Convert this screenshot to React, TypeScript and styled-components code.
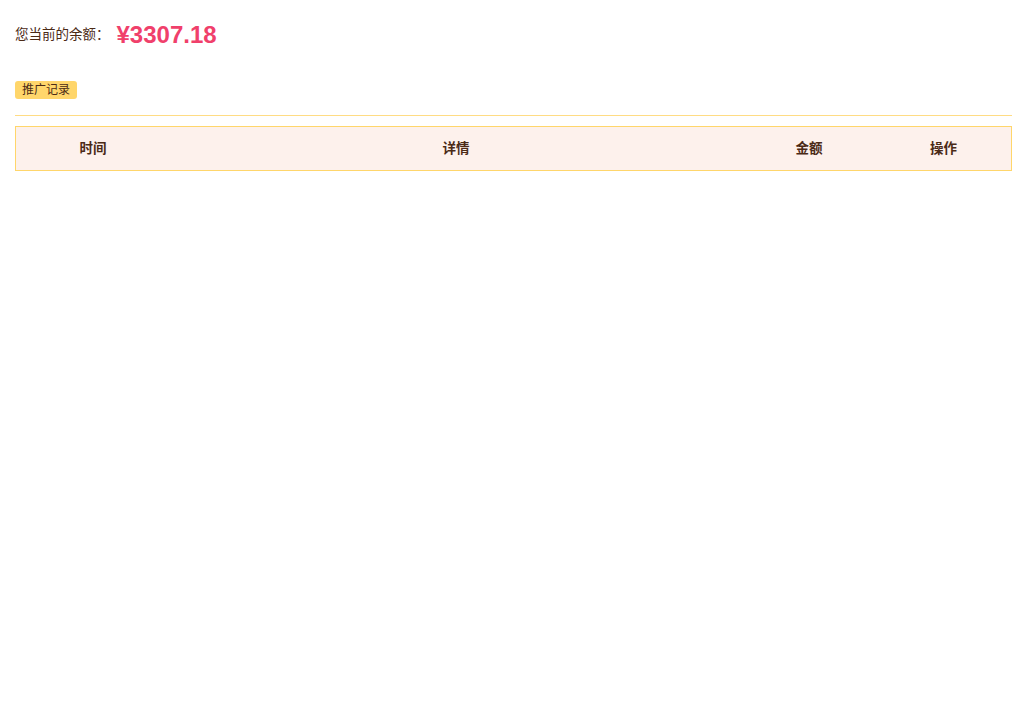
import styled, { createGlobalStyle } from 'styled-components';

const GlobalStyle = createGlobalStyle`
  html, body {
    margin: 0;
    padding: 0;
    background: #fff;
    font-family: "Liberation Sans", Arial, "Noto Sans CJK SC", sans-serif;
    color: #4b2a16;
  }
`;

const columns = [
  { title: '时间', width: 154 },
  { title: '详情', width: 572 },
  { title: '金额', width: 134 },
  { title: '操作', width: 135 },
];

export default function App() {
  return (
    <>
      <GlobalStyle />
      <Page>
        <Balance>
          <Label>您当前的余额：</Label>
          <Amount>¥3307.18</Amount>
        </Balance>
        <Tabs>
          <Tab>推广记录</Tab>
        </Tabs>
        <Table>
          <HeadRow>
            {columns.map((c) => (
              <HeadCell key={c.title} $width={c.width}>
                {c.title}
              </HeadCell>
            ))}
          </HeadRow>
        </Table>
      </Page>
    </>
  );
}

const Page = styled.div`
  padding: 20px 15px 0 15px;
`;

const Balance = styled.div`
  display: flex;
  align-items: center;
  height: 30px;
`;

const Label = styled.span`
  font-size: 13.5px;
  color: #4b2a16;
  margin-right: 7px;
  margin-bottom: 4px;
`;

const Amount = styled.span`
  font-size: 24px;
  font-weight: bold;
  color: #f0406b;
`;

const Tabs = styled.div`
  margin-top: 31px;
  padding-bottom: 16px;
  border-bottom: 1px solid #ffdc84;
  display: flex;
`;

const Tab = styled.div`
  background: #ffd66b;
  border-radius: 3px;
  font-size: 12px;
  line-height: 17px;
  padding: 1px 7px 0;
  height: 18px;
  box-sizing: border-box;
  color: #4b2a16;
`;

const Table = styled.div`
  margin-top: 10px;
  border: 1px solid #ffd66b;
  background: #fdf1ec;
`;

const HeadRow = styled.div`
  display: flex;
  box-sizing: border-box;
  height: 43px;
  padding-bottom: 4px;
  align-items: center;
`;

const HeadCell = styled.div<{ $width: number }>`
  width: ${(p) => p.$width}px;
  text-align: center;
  font-size: 13.5px;
  font-weight: bold;
  color: #4b2a16;
`;
